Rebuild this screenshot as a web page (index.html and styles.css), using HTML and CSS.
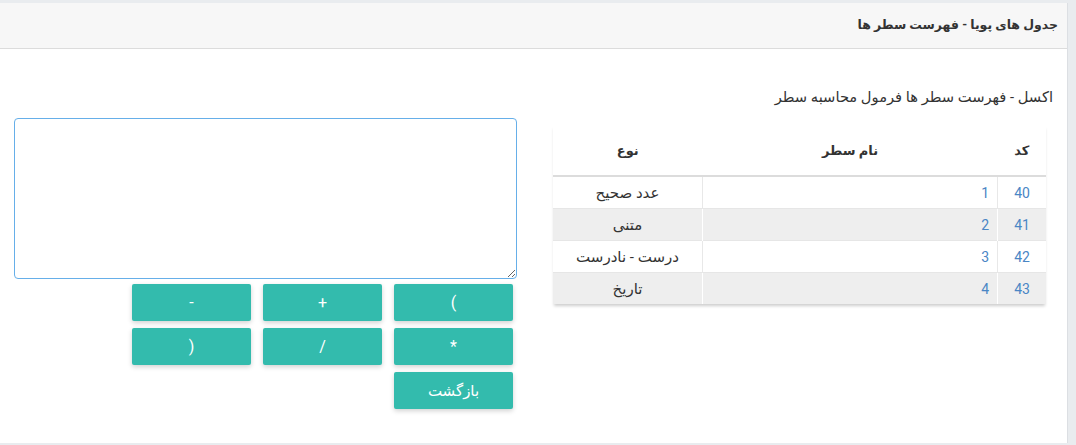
FILE: index.html
```html
<!DOCTYPE html>
<html lang="fa" dir="rtl">
<head>
<meta charset="utf-8">
<link rel="stylesheet" href="styles.css">
</head>
<body>
<div class="card">
  <div class="card-header">جدول های پویا - فهرست سطر ها</div>
  <div class="card-body">
    <div class="subtitle">اکسل - فهرست سطر ها فرمول محاسبه سطر</div>
    <div class="row">
      <div class="table-col">
        <table class="grid">
          <thead>
            <tr><th class="c-code">کد</th><th class="c-name">نام سطر</th><th class="c-type">نوع</th></tr>
          </thead>
          <tbody>
            <tr><td class="c-code num">40</td><td class="c-name num">1</td><td class="c-type">عدد صحیح</td></tr>
            <tr><td class="c-code num">41</td><td class="c-name num">2</td><td class="c-type">متنی</td></tr>
            <tr><td class="c-code num">42</td><td class="c-name num">3</td><td class="c-type">درست - نادرست</td></tr>
            <tr><td class="c-code num">43</td><td class="c-name num">4</td><td class="c-type">تاریخ</td></tr>
          </tbody>
        </table>
      </div>
      <div class="formula-col">
        <textarea class="formula"></textarea>
        <div class="keys">
          <button class="key">)</button>
          <button class="key">+</button>
          <button class="key">-</button>
          <button class="key">*</button>
          <button class="key">/</button>
          <button class="key">(</button>
          <button class="key key-back">بازگشت</button>
        </div>
      </div>
    </div>
  </div>
</div>
</body>
</html>
```
FILE: styles.css
```css
html, body {
  margin: 0;
  padding: 0;
}
body {
  background: #e9ecef;
  font-family: Roboto, "DejaVu Sans", sans-serif;
  color: #333;
  font-size: 14px;
  direction: rtl;
}
.card {
  margin: 3px auto 0 0;
  width: 1068px;
  height: 440px;
  background: #fff;
  border-right: 1px solid #dcdfe3;
  box-sizing: border-box;
}
.card-header {
  height: 46px;
  box-sizing: border-box;
  background: #f7f7f7;
  border-bottom: 1px solid #dcdcdc;
  padding: 0 9px;
  line-height: 44px;
  font-weight: bold;
  font-size: 12.5px;
  color: #333;
}
.card-body {
  padding: 0 14px 0 14px;
}
.subtitle {
  margin-top: 37px;
  font-size: 14.7px;
  line-height: 22px;
  color: #333;
}
.row {
  display: flex;
  flex-direction: row;
  gap: 36px;
  margin-top: 10px;
}
.table-col {
  width: 493px;
  margin-right: 7px;
  padding-top: 7px;
}
.grid {
  width: 100%;
  border-collapse: collapse;
  box-shadow: 0 3px 3px -1px rgba(0, 0, 0, 0.2);
}
.grid th {
  height: 50px;
  font-weight: bold;
  font-size: 13px;
  text-align: center;
  border-bottom: 2px solid #dcdcdc;
  padding: 0 8px;
  vertical-align: middle;
}
.grid td {
  height: 31px;
  padding: 0 8px;
  border-top: 1px solid #e6e6e6;
  font-size: 14px;
  line-height: 20px;
}
.grid td + td {
  border-right: 1px solid #e8e8e8;
}
.grid tbody tr:nth-child(even) td {
  background: #eeeeee;
}
.grid tbody tr:nth-child(even) td + td {
  border-right: 1px solid #ffffff;
}
.c-code { width: 32px; text-align: center; }
.grid td.c-code { text-align: center; }
.grid td.c-name { text-align: right; }
.c-type { width: 133px; }
.grid td.c-type { text-align: center; font-size: 15px; }
.num {
  color: #4a86c5;
}
.formula-col {
  width: 503px;
  display: flex;
  flex-direction: column;
}
.formula {
  width: 503px;
  height: 161px;
  box-sizing: border-box;
  border: 1px solid #66afe9;
  border-radius: 4px;
  margin: 0;
  resize: vertical;
  font-family: inherit;
  direction: ltr;
}
.keys {
  display: grid;
  grid-template-columns: repeat(3, 119px);
  column-gap: 12px;
  row-gap: 7px;
  margin-top: 5px;
  padding-right: 4px;
}
.key {
  height: 37px;
  border: none;
  border-radius: 2px;
  background: #33bbad;
  color: #fff;
  font-family: inherit;
  font-size: 16px;
  box-shadow: 0 2px 5px rgba(0, 0, 0, 0.18);
  padding: 0;
}
.key-back {
  font-size: 15px;
}
```
